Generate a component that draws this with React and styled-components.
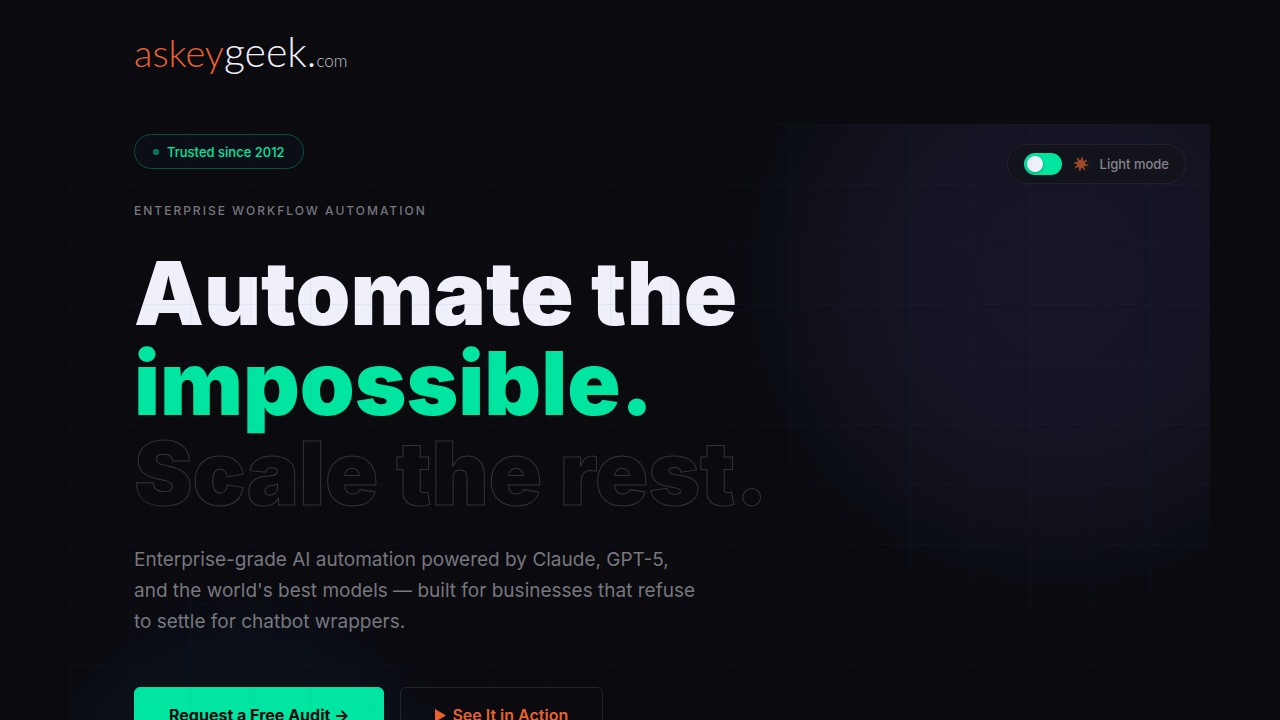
import * as React from "react"
import styled, { createGlobalStyle } from "styled-components"

const App = () => {
  const [light, setLight] = React.useState(false)

  return (
    <>
      <GlobalStyle />
      <Header>
        <Logo href="/">
          <LogoAccent>askey</LogoAccent>
          <LogoName>geek.</LogoName>
          <LogoSuffix>com</LogoSuffix>
        </Logo>
      </Header>
      <Hero>
        <TopRow>
          <Badge>
            <BadgeDot />
            Trusted since 2012
          </Badge>
          <ModeSwitch>
            <SwitchInput
              type="checkbox"
              role="switch"
              checked={light}
              onChange={() => setLight(!light)}
            />
            <SunIcon />
            Light mode
          </ModeSwitch>
        </TopRow>
        <Eyebrow>ENTERPRISE WORKFLOW AUTOMATION</Eyebrow>
        <Title>
          <TitleLine>Automate the</TitleLine>
          <TitleLine $tone="accent">impossible.</TitleLine>
          <TitleLine $tone="outline">Scale the rest.</TitleLine>
        </Title>
        <Lead>
          Enterprise-grade AI automation powered by Claude, GPT-5,
          <br />
          and the world's best models — built for businesses that refuse
          <br />
          to settle for chatbot wrappers.
        </Lead>
        <Actions>
          <Button href="#audit" $primary>
            Request a Free Audit →
          </Button>
          <Button href="#demo">
            <PlayIcon />
            See It in Action
          </Button>
        </Actions>
      </Hero>
    </>
  )
}

export default App

const SunIcon = () => (
  <svg width="16" height="16" viewBox="0 0 16 16" fill="#9a4a28" aria-hidden="true">
    <circle cx="8" cy="8" r="4.4" />
    {[12, 57, 102, 147, 192, 237, 282, 327].map(angle => (
      <path
        key={angle}
        d="M7.3 4.5 L7.2 0.4 L9 1.8 L8.7 4.5Z"
        transform={`rotate(${angle} 8 8)`}
      />
    ))}
  </svg>
)

const PlayIcon = () => (
  <svg width="11" height="13" viewBox="0 0 11 13" fill="#e8622f" aria-hidden="true">
    <path d="M0 0 L11 6.5 L0 13Z" />
  </svg>
)

const GlobalStyle = createGlobalStyle`
  * {
    box-sizing: border-box;
  }

  body {
    margin: 0;
    background: #0a0a0f;
    color: #f0f0fa;
    font-family: "Inter", sans-serif;
  }
`

const Header = styled.header`
  max-width: 1140px;
  height: 124px;
  margin: 0 auto;
  padding: 28px 64px;
`

const Logo = styled.a`
  display: inline-flex;
  align-items: baseline;
  color: #f0f0fa;
  font-family: "Lato", sans-serif;
  font-weight: 300;
  line-height: 48px;
  text-decoration: none;
`

const LogoAccent = styled.span`
  color: #e8622f;
  font-size: 38px;
`

const LogoName = styled.span`
  font-size: 41px;
`

const LogoSuffix = styled.span`
  color: #c4c4cc;
  font-size: 17px;
`

const Hero = styled.section`
  position: relative;
  max-width: 1140px;
  margin: 0 auto;
  padding: 10px 24px 80px 64px;
  overflow: hidden;
  background:
    radial-gradient(circle 340px at calc(100% - 150px) 150px, #161526 0%, #151425 40%, #11111c 68%, #0b0d14 88%, transparent 100%),
    radial-gradient(circle 230px at 175px 690px, #0b101a 0%, #0b0f18 75%, transparent 100%);

  /* grid drawn above the content */
  &::after {
    content: "";
    position: absolute;
    inset: 0;
    pointer-events: none;
    background-image:
      linear-gradient(rgba(30, 80, 130, 0.07) 1px, transparent 1px),
      linear-gradient(90deg, rgba(30, 80, 130, 0.07) 1px, transparent 1px);
    background-size: 60px 60px;
  }
`

const TopRow = styled.div`
  display: flex;
  align-items: flex-start;
  justify-content: space-between;
`

const Badge = styled.div`
  display: flex;
  align-items: center;
  gap: 8px;
  height: 35px;
  padding: 0 18px;
  border: 1px solid #0b4f40;
  border-radius: 100px;
  background: #0b0e16;
  color: #00e5a0;
  font-size: 13px;
  font-weight: 500;
`

const BadgeDot = styled.span`
  width: 6px;
  height: 6px;
  border-radius: 2px;
  background: #07745a;
`

const ModeSwitch = styled.label`
  display: flex;
  align-items: center;
  gap: 11px;
  height: 40px;
  margin-top: 10px;
  padding: 0 16px;
  border: 1px solid #24232b;
  border-radius: 100px;
  background: #13131c;
  color: #85858c;
  font-size: 13px;
  font-weight: 500;
  cursor: pointer;
`

const SwitchInput = styled.input`
  appearance: none;
  display: flex;
  align-items: center;
  width: 38px;
  height: 22px;
  margin: 0;
  padding: 0 3px;
  border-radius: 22px;
  background: #00e5a0;
  cursor: pointer;

  &::before {
    content: "";
    width: 16px;
    height: 16px;
    border-radius: 50%;
    background: #f0f0fa;
    box-shadow: 0 1px 3px rgba(0, 0, 0, 0.3);
  }

  &:checked {
    justify-content: flex-end;
  }
`

const Eyebrow = styled.p`
  margin: 17px 0 0;
  color: #77777e;
  font-size: 12px;
  font-weight: 500;
  line-height: 20px;
  letter-spacing: 2px;
`

const Title = styled.h1`
  margin: 27px 0 0;
  font-size: 88px;
  font-weight: 900;
  line-height: 90px;
`

const TitleLine = styled.span`
  display: block;
  color: ${({ $tone }) =>
    $tone === "outline" ? "transparent" : $tone === "accent" ? "#00e5a0" : "#f0f0fa"};
  -webkit-text-stroke: ${({ $tone }) => ($tone === "outline" ? "1px #34343b" : "0")};
`

const Lead = styled.p`
  margin: 26px 0 0;
  color: #77777e;
  font-size: 19px;
  font-weight: 400;
  line-height: 31px;
`

const Actions = styled.div`
  display: flex;
  gap: 16px;
  margin-top: 50px;
`

const Button = styled.a`
  display: flex;
  align-items: center;
  gap: 6px;
  height: 56px;
  padding: 0 34px;
  border: 1px solid ${({ $primary }) => ($primary ? "#00e5a0" : "#24242b")};
  border-radius: 6px;
  background: ${({ $primary }) => ($primary ? "#00e5a0" : "transparent")};
  color: ${({ $primary }) => ($primary ? "#0a0a0f" : "#e8622f")};
  font-size: 16px;
  font-weight: ${({ $primary }) => ($primary ? 700 : 600)};
  text-decoration: none;
`
